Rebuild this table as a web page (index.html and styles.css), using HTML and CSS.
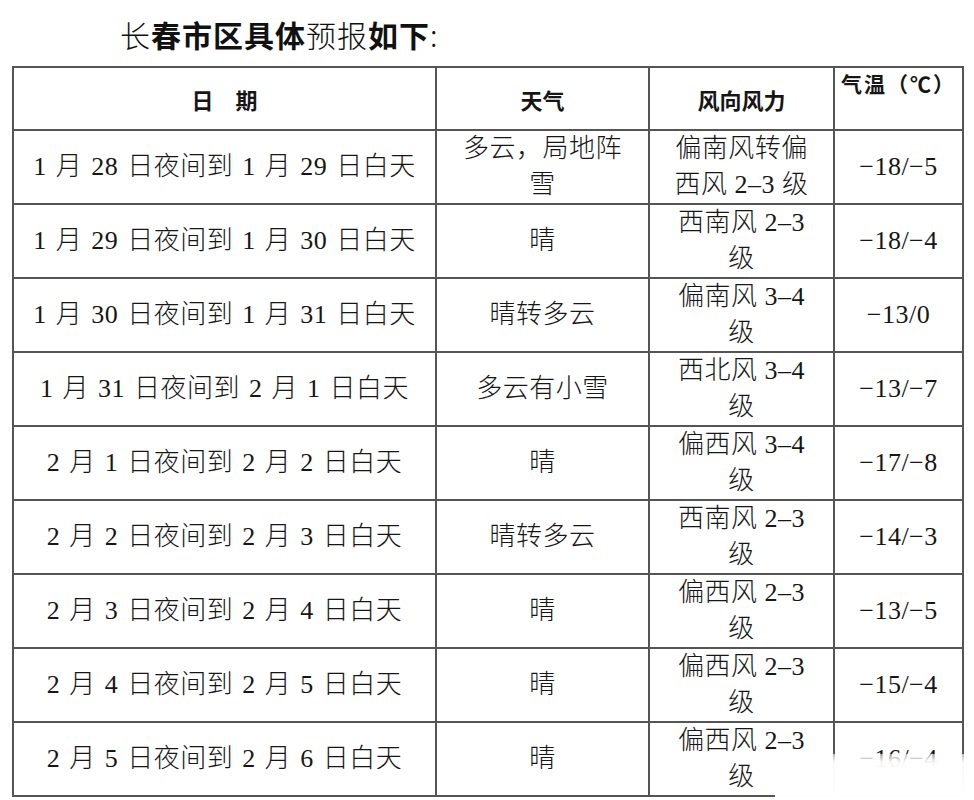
FILE: index.html
```html
<!DOCTYPE html>
<html lang="zh-CN">
<head>
<meta charset="utf-8">
<title>长春市区具体预报</title>
<link rel="stylesheet" href="styles.css">
</head>
<body>
<div class="page">
  <h1 class="title">长<b>春市区具体</b>预报<b>如下</b>:</h1>
  <table class="forecast">
    <colgroup>
      <col class="c-date"><col class="c-wx"><col class="c-wind"><col class="c-temp">
    </colgroup>
    <thead>
      <tr>
        <th>日　期</th>
        <th>天气</th>
        <th>风向风力</th>
        <th class="th-top">气温（℃）</th>
      </tr>
    </thead>
    <tbody>
      <tr><td class="date">1 月 28 日夜间到 1 月 29 日白天</td><td>多云，局地阵<br>雪</td><td>偏南风转偏<br>西风 2–3 级</td><td>−18/−5</td></tr>
      <tr><td class="date">1 月 29 日夜间到 1 月 30 日白天</td><td>晴</td><td>西南风 2–3<br>级</td><td>−18/−4</td></tr>
      <tr><td class="date">1 月 30 日夜间到 1 月 31 日白天</td><td>晴转多云</td><td>偏南风 3–4<br>级</td><td>−13/0</td></tr>
      <tr><td class="date">1 月 31 日夜间到 2 月 1 日白天</td><td>多云有小雪</td><td>西北风 3–4<br>级</td><td>−13/−7</td></tr>
      <tr><td class="date">2 月 1 日夜间到 2 月 2 日白天</td><td>晴</td><td>偏西风 3–4<br>级</td><td>−17/−8</td></tr>
      <tr><td class="date">2 月 2 日夜间到 2 月 3 日白天</td><td>晴转多云</td><td>西南风 2–3<br>级</td><td>−14/−3</td></tr>
      <tr><td class="date">2 月 3 日夜间到 2 月 4 日白天</td><td>晴</td><td>偏西风 2–3<br>级</td><td>−13/−5</td></tr>
      <tr><td class="date">2 月 4 日夜间到 2 月 5 日白天</td><td>晴</td><td>偏西风 2–3<br>级</td><td>−15/−4</td></tr>
      <tr><td class="date">2 月 5 日夜间到 2 月 6 日白天</td><td>晴</td><td>偏西风 2–3<br>级</td><td>−16/−4</td></tr>
    </tbody>
  </table>
  <div class="fade"></div>
</div>
</body>
</html>
```
FILE: styles.css
```css
html, body {
  margin: 0;
  padding: 0;
  background: #fff;
}
.page {
  position: relative;
  width: 974px;
  height: 800px;
  overflow: hidden;
  font-family: "Liberation Serif", "Noto Sans CJK SC", serif;
  color: #161616;
}
.title {
  margin: 0;
  padding: 14px 0 12px 120px;
  height: 40px;
  font-family: "Noto Sans CJK SC", sans-serif;
  font-size: 30px;
  line-height: 40px;
  font-weight: 300;
  color: #111;
  letter-spacing: 1px;
}
.title b {
  font-weight: 600;
}
.forecast {
  margin-left: 12px;
  width: 950px;
  border-collapse: collapse;
  table-layout: fixed;
  border: 2px solid #555;
}
.c-date { width: 423px; }
.c-wx { width: 213px; }
.c-wind { width: 185px; }
.c-temp { width: 129px; }
.forecast thead tr {
  height: 63px;
}
.forecast tbody tr {
  height: 73.4px;
}
.forecast th,
.forecast td {
  border: 2px solid #555;
  padding: 0;
  text-align: center;
  vertical-align: middle;
}
.forecast th {
  font-family: "Noto Sans CJK SC", sans-serif;
  font-size: 22px;
  font-weight: 700;
  line-height: 28px;
}
.forecast th.th-top {
  vertical-align: top;
  font-size: 21px;
  padding-top: 1px;
  letter-spacing: 2px;
}
.forecast td {
  font-size: 26px;
  line-height: 36px;
  font-weight: 300;
  letter-spacing: 0.5px;
}
.forecast td.date {
  word-spacing: 2px;
}
.fade {
  position: absolute;
  left: 775px;
  top: 754px;
  width: 199px;
  height: 46px;
  background: linear-gradient(to bottom, rgba(255,255,255,0.55) 0, rgba(255,255,255,0.96) 8px, #fff 100%);
}
```
